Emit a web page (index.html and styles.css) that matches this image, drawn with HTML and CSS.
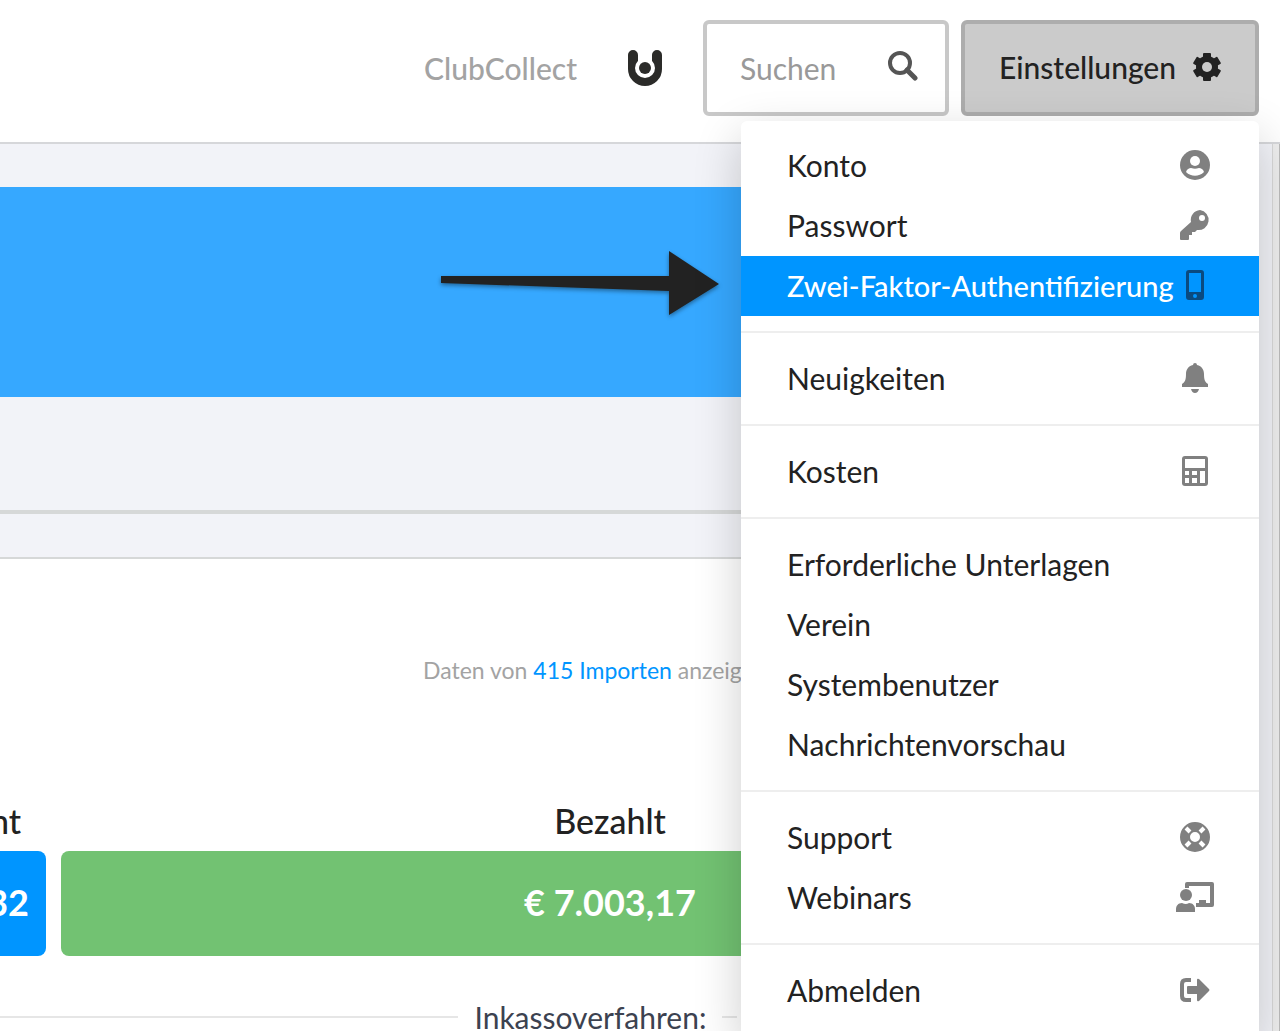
FILE: index.html
```html
<!DOCTYPE html>
<html lang="de">
<head>
    <meta charset="UTF-8">
    <meta name="viewport" content="width=device-width, initial-scale=1.0">
    <title>ClubCollect</title>
    <link rel="stylesheet" href="styles.css">
</head>
<body>
    <header class="header">
        <span class="club-name">ClubCollect</span>
        <svg class="club-logo" viewBox="0 0 36 38">
            <path d="M6 6v14a12 12 0 0 0 24 0V6" fill="none" stroke="#2b2b29" stroke-width="10" stroke-linecap="round"/>
            <circle cx="18" cy="19" r="10" fill="#fff"/>
            <circle cx="18" cy="19" r="6" fill="#2b2b29"/>
        </svg>
        <label class="search">
            <input type="text" placeholder="Suchen" aria-label="Suchen">
            <svg class="search-icon" viewBox="0 0 30 30">
                <circle cx="12" cy="12" r="10" fill="none" stroke="currentColor" stroke-width="4"/>
                <path d="M19 19l8 8" stroke="currentColor" stroke-width="5" stroke-linecap="round"/>
            </svg>
        </label>
        <div class="settings">
            <button class="settings-button" type="button">
                Einstellungen
                <svg class="settings-icon" viewBox="0 0 28 28">
                    <g fill="currentColor">
                        <rect x="10" y="0" width="8" height="28" rx="1"/>
                        <rect x="10" y="0" width="8" height="28" rx="1" transform="rotate(60 14 14)"/>
                        <rect x="10" y="0" width="8" height="28" rx="1" transform="rotate(120 14 14)"/>
                        <circle cx="14" cy="14" r="11"/>
                    </g>
                    <circle cx="14" cy="14" r="5" fill="#cbcbcb"/>
                </svg>
            </button>
            <nav class="menu">
                <ul>
                    <li><a href="#">Konto
                        <svg viewBox="0 0 30 30">
                            <circle cx="15" cy="15" r="15" fill="currentColor"/>
                            <circle cx="15" cy="11" r="5" fill="#fff"/>
                            <path d="M6 22c1-3 3-4 5-4 3 1 5 1 8 0 2 0 4 1 5 4-5 5-13 5-18 0z" fill="#fff"/>
                        </svg></a></li>
                    <li><a href="#">Passwort
                        <svg viewBox="0 0 30 30">
                            <path d="M20 0a10 10 0 1 1-3 20l-2 2h-3v3H9v4q0 1-1 1H1q-1 0-1-1v-6q0-1 1-2l10-9A10 10 0 0 1 20 0z" fill="currentColor"/>
                            <circle cx="22" cy="8" r="3" fill="#fff"/>
                        </svg></a></li>
                    <li><a class="active" href="#">Zwei-Faktor-Authentifizierung
                        <svg viewBox="0 0 30 30">
                            <path fill-rule="evenodd" d="M9 0h12q3 0 3 3v24q0 3-3 3H9q-3 0-3-3V3q0-3 3-3zM9 3v19h12V3zM15 24a2 2 0 1 0 0 4 2 2 0 0 0 0-4z" fill="currentColor"/>
                        </svg></a></li>
                </ul>
                <ul>
                    <li><a href="#">Neuigkeiten
                        <svg viewBox="0 0 30 30">
                            <path d="M15 0q2 0 2 2c5 1 7 5 7 9 0 6 1 8 4 10v3H2v-3c3-2 4-4 4-10 0-4 2-8 7-9q0-2 2-2zM11 26h8q-1 4-4 4t-4-4z" fill="currentColor"/>
                        </svg></a></li>
                </ul>
                <ul>
                    <li><a href="#">Kosten
                        <svg viewBox="0 0 30 30">
                            <rect x="2" y="0" width="26" height="30" rx="3" fill="currentColor"/>
                            <path d="M5 3h20v9H5zM5 15h4v4H5zM12 15h5v4h-5zM20 15h5v12h-5zM5 22h4v5H5zM12 22h5v5h-5z" fill="#fff"/>
                        </svg></a></li>
                </ul>
                <ul>
                    <li><a href="#">Erforderliche Unterlagen</a></li>
                    <li><a href="#">Verein</a></li>
                    <li><a href="#">Systembenutzer</a></li>
                    <li><a href="#">Nachrichtenvorschau</a></li>
                </ul>
                <ul>
                    <li><a href="#">Support
                        <svg viewBox="0 0 30 30">
                            <circle cx="15" cy="15" r="10" fill="none" stroke="currentColor" stroke-width="10"/>
                            <path d="M6 6l4 4M24 6l-4 4M6 24l4-4M24 24l-4-4" stroke="#fff" stroke-width="4"/>
                        </svg></a></li>
                    <li><a href="#">Webinars
                        <svg class="wide" viewBox="0 0 38 30">
                            <path d="M11 6V2h25v21H20" fill="none" stroke="currentColor" stroke-width="4" stroke-linejoin="round"/>
                            <path d="M23 22v-4h7v4z" fill="currentColor"/>
                            <circle cx="10" cy="13" r="6" fill="currentColor"/>
                            <path d="M6 21q4 2 7 0c4 0 6 3 6 6v3H0v-3c0-3 2-6 6-6z" fill="currentColor"/>
                        </svg></a></li>
                </ul>
                <ul>
                    <li><a href="#">Abmelden
                        <svg viewBox="0 0 30 30">
                            <path d="M11 5H6Q2 5 2 9v12q0 4 4 4h5" fill="none" stroke="currentColor" stroke-width="4"/>
                            <path d="M8 11h9V5q0-2 2-1l10 10q1 1 0 2L19 26q-2 1-2-1v-6H8q-1 0-1-1v-6q0-1 1-1z" fill="currentColor"/>
                        </svg></a></li>
                </ul>
            </nav>
        </div>
    </header>

    <div class="page">
        <main class="content">
            <div class="banner">
                <svg class="arrow" viewBox="0 0 280 66">
                    <path d="M0 26L228 26V1L278 34L228 65V41L0 33z" fill="#222"/>
                </svg>
            </div>
            <hr class="divider">
            <section class="overview">
                <p class="imports">Daten von <a href="#">415 Importen</a> anzeigen</p>
                <div class="totals">
                    <div class="total total-open">
                        <h2>nt</h2>
                        <div class="amount">32</div>
                    </div>
                    <div class="total total-paid">
                        <h2>Bezahlt</h2>
                        <div class="amount">€ 7.003,17</div>
                    </div>
                </div>
                <div class="collection">Inkassoverfahren:</div>
            </section>
        </main>
        <div class="scrollbar"></div>
    </div>
</body>
</html>
```

FILE: styles.css
```css
* {
    box-sizing: border-box;
}
body {
    margin: 0;
    height: 100vh;
    overflow: hidden;
    display: flex;
    flex-direction: column;
    font-family: Lato, "Open Sans", sans-serif;
    font-size: 30px;
    color: #222;
    background: white;
}
a {
    color: #0095ff;
    text-decoration: none;
}

/* Header */
.header {
    display: flex;
    flex: none;
    justify-content: flex-end;
    align-items: center;
    padding: 20px 21px 26px;
    border-bottom: 2px solid #d6d7da;
}
.club-name {
    color: #a3a3a3;
    font-weight: 500;
}
.club-logo {
    width: 36px;
    height: 38px;
    margin: 0 40px 0 50px;
}
.search {
    display: flex;
    align-items: center;
    width: 246px;
    height: 96px;
    margin-right: 12px;
    padding: 0 27px 0 33px;
    border: 4px solid #c8c8c8;
    border-radius: 6px;
}
.search input {
    flex: 1;
    min-width: 0;
    padding: 0;
    border: none;
    outline: none;
    background: none;
    font: inherit;
}
.search input::placeholder {
    color: #999;
}
.search-icon {
    width: 30px;
    height: 30px;
    margin-bottom: 4px;
    color: #555;
}
.settings {
    position: relative;
}
.settings-button {
    display: flex;
    align-items: center;
    justify-content: center;
    gap: 17px;
    width: 298px;
    height: 96px;
    padding: 0 0 2px;
    border: 4px solid #adadad;
    border-radius: 6px;
    background: #cbcbcb;
    color: #222;
    font: inherit;
    font-weight: 500;
    cursor: pointer;
}
.settings-icon {
    width: 28px;
    height: 28px;
}

/* Dropdown menu */
.menu {
    position: absolute;
    z-index: 10;
    top: calc(100% + 5px);
    right: 0;
    width: 518px;
    border-radius: 6px;
    background: white;
    box-shadow: 0 16px 48px rgba(0, 0, 0, 0.2);
}
.menu ul {
    margin: 0;
    padding: 15px 0;
    list-style: none;
}
.menu ul + ul {
    padding-top: 16px;
    border-top: 2px solid #eee;
}
.menu a {
    display: flex;
    align-items: center;
    justify-content: space-between;
    height: 60px;
    padding: 0 49px 2px 46px;
    color: #222;
    white-space: nowrap;
}
.menu a.active {
    background: #0095ff;
    color: white;
    font-size: 29px;
    font-weight: 500;
}
.menu svg {
    flex: none;
    width: 30px;
    height: 30px;
    color: #808080;
}
.menu svg.wide {
    width: 38px;
    margin-right: -4px;
}
.menu .active svg {
    color: #0a4a80;
}

/* Page */
.page {
    display: flex;
    flex: 1;
    min-height: 0;
}
.content {
    flex: 1;
    min-width: 0;
    padding: 43px 43px 0 0;
    background: #f2f3f8;
}
.banner {
    position: relative;
    height: 210px;
    background: #36a8ff;
}
.arrow {
    position: absolute;
    top: 63px;
    left: 441px;
    width: 280px;
    height: 66px;
    overflow: visible;
    filter: drop-shadow(0 2px 2px rgba(0, 0, 0, 0.4));
}
.divider {
    height: 4px;
    margin: 113px 0 43px;
    border: none;
    background: #d6d8d8;
}
.overview {
    border-top: 2px solid #d6d8d8;
    background: white;
}
.imports {
    margin: 0;
    padding: 95px 0 115px 423px;
    color: #a3a3a3;
    font-size: 23px;
    line-height: 32px;
    white-space: nowrap;
}
.totals {
    display: flex;
    gap: 15px;
}
.total h2 {
    margin: 0 0 10px;
    font-size: 34px;
    font-weight: 500;
    line-height: 40px;
}
.amount {
    display: flex;
    align-items: center;
    justify-content: center;
    height: 105px;
    padding-bottom: 4px;
    border-radius: 8px;
    color: white;
    font-size: 36px;
    font-weight: bold;
}
.total-open {
    width: 46px;
}
.total-open h2 {
    display: flex;
    justify-content: flex-end;
    padding-right: 25px;
}
.total-open .amount {
    justify-content: flex-end;
    padding-right: 17px;
    border-radius: 0 8px 8px 0;
    background: #0095ff;
}
.total-paid {
    flex: 1;
    margin-right: 70px;
    text-align: center;
}
.total-paid .amount {
    background: #72c272;
}
.collection {
    display: flex;
    align-items: center;
    gap: 16px;
    width: 60%;
    padding: 43px 0 20px;
    color: #3c4250;
    line-height: 36px;
}
.collection::before,
.collection::after {
    content: "";
    flex: 1;
    height: 2px;
    background: #e6e6e6;
}
.collection::after {
    flex: none;
    width: 15px;
}
.scrollbar {
    width: 8px;
    border-left: 1px solid #d8d8d8;
    border-right: 1px solid #bbb;
    background: #eee;
}
```
